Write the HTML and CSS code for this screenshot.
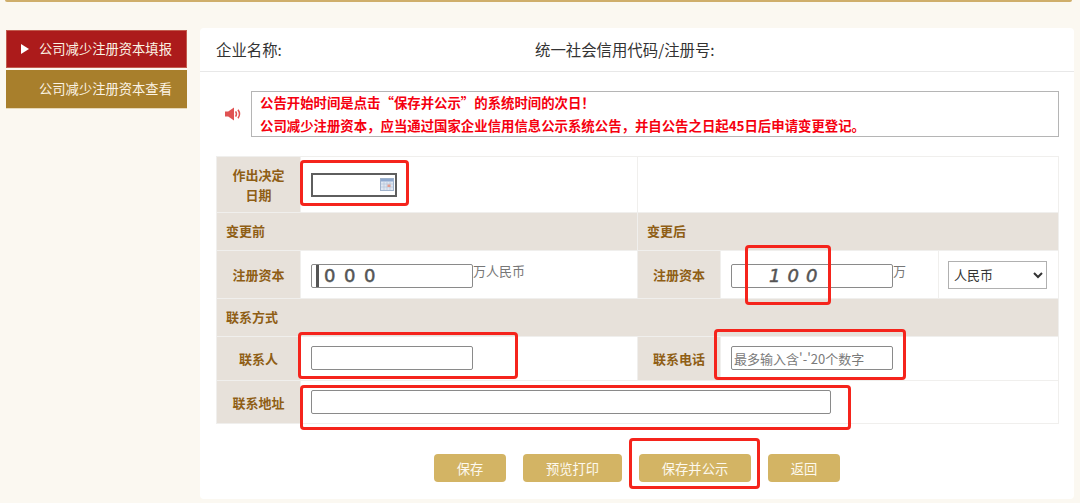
FILE: index.html
```html
<!DOCTYPE html>
<html lang="zh-CN">
<head>
<meta charset="utf-8">
<title>公司减少注册资本填报</title>
<link rel="stylesheet" href="styles.css">
</head>
<body>
<div class="page">
  <div class="topbar"></div>
  <div class="layout">
    <nav class="sidebar">
      <a class="nav-item nav-active"><span class="nav-arrow"></span>公司减少注册资本填报</a>
      <a class="nav-item nav-plain">公司减少注册资本查看</a>
    </nav>
    <main class="panel">
      <header class="company">
        <span class="company-name">企业名称:</span>
        <span class="company-code">统一社会信用代码/注册号:</span>
      </header>
      <section class="notice-row">
        <svg class="speaker" width="17" height="14" viewBox="0 0 17 14">
          <path d="M0 4.500h3.200L9 .6v12.800L3.200 9.500H0z" fill="#e05252"/>
          <path d="M10.600 4.400c1 1.500 1 3.700 0 5.200M13 2.800c1.800 2.500 1.800 5.900 0 8.400" fill="none" stroke="#e05252" stroke-width="1.500"/>
        </svg>
        <div class="notice">
          <p>公告开始时间是点击“保存并公示”的系统时间的次日！</p>
          <p>公司减少注册资本，应当通过国家企业信用信息公示系统公告，并自公告之日起45日后申请变更登记。</p>
        </div>
      </section>
      <table class="form-table">
        <colgroup>
          <col class="col-label"><col class="col-value"><col class="col-label2"><col class="col-value2"><col class="col-extra">
        </colgroup>
        <tr class="row-date">
          <th class="label label-date">作出决定<br>日期</th>
          <td class="value">
            <span class="date-field">
              <input class="date-input" type="text">
              <svg class="calendar" width="14" height="13" viewBox="0 0 14 13">
                <rect x="0.500" y="0.500" width="13" height="12" fill="#dfe7f2" stroke="#9fb2cc"/>
                <rect x="1" y="1" width="12" height="2.500" fill="#8fa9cf"/>
                <path d="M1 6h12M1 9h12M4 4v8M7 4v8M10 4v8" stroke="#b4c4da" stroke-width="0.700"/>
                <rect x="7.500" y="6.500" width="3" height="2.500" fill="#e39a8c"/>
              </svg>
            </span>
          </td>
          <td class="value" colspan="3"></td>
        </tr>
        <tr class="row-section">
          <th class="section" colspan="2">变更前</th>
          <th class="section" colspan="3">变更后</th>
        </tr>
        <tr class="row-capital">
          <th class="label">注册资本</th>
          <td class="value"><input class="field field-before masked" type="text" value="000"><span class="unit">万人民币</span></td>
          <th class="label">注册资本</th>
          <td class="value"><input class="field masked masked-after" type="text" value="100"><span class="unit">万</span></td>
          <td class="value value-select">
            <select class="currency"><option>人民币</option></select>
          </td>
        </tr>
        <tr class="row-section">
          <th class="section" colspan="5">联系方式</th>
        </tr>
        <tr class="row-contact">
          <th class="label">联系人</th>
          <td class="value"><input class="field" type="text"></td>
          <th class="label">联系电话</th>
          <td class="value" colspan="2"><input class="field" type="text" placeholder="最多输入含'-'20个数字"></td>
        </tr>
        <tr class="row-address">
          <th class="label">联系地址</th>
          <td class="value" colspan="4"><input class="field field-wide" type="text"></td>
        </tr>
      </table>
      <div class="actions">
        <button class="btn btn-save" type="button">保存</button>
        <button class="btn btn-preview" type="button">预览打印</button>
        <button class="btn btn-publish" type="button">保存并公示</button>
        <button class="btn btn-back" type="button">返回</button>
      </div>
    </main>
  </div>
  <div class="mark mark-date"></div>
  <div class="mark mark-capital"></div>
  <div class="mark mark-person"></div>
  <div class="mark mark-phone"></div>
  <div class="mark mark-address"></div>
  <div class="mark mark-publish"></div>
</div>
</body>
</html>
```
FILE: styles.css
```css
* { box-sizing: border-box; }
html, body { margin: 0; height: 100%; overflow: hidden; }
body {
  background: #fbf8f1;
  font-family: "Noto Sans CJK SC", "Liberation Sans", sans-serif;
  color: #333;
}
.page { position: relative; width: 1080px; height: 503px; }
.topbar {
  height: 2px;
  margin: 0 8px 0 5px;
  background: #cfae6b;
  border-radius: 0 0 3px 3px;
}
.layout {
  display: flex;
  align-items: flex-start;
  padding: 26px 6px 0 6px;
  gap: 13px;
}
.sidebar { width: 181px; display: flex; flex-direction: column; gap: 2px; margin-top: 2px; }
.nav-item {
  display: flex;
  align-items: center;
  height: 38px;
  padding: 0 0 2px 33px;
  font-size: 13.300px;
  color: #fbf3e4;
  white-space: nowrap;
  box-shadow: inset 0 0 0 1px rgba(235, 215, 175, .35);
}
.nav-active { background: #ac1b1b; position: relative; }
.nav-plain { background: #a87f2c; box-shadow: 0 1px 0 #e6d8b8; }
.nav-arrow {
  position: absolute;
  left: 15px;
  top: 14px;
  border-left: 8px solid #fff;
  border-top: 5px solid transparent;
  border-bottom: 5px solid transparent;
}
.panel {
  width: 874px;
  height: 471px;
  background: #fff;
  border-radius: 4px;
}
.company {
  display: flex;
  align-items: center;
  height: 44px;
  padding: 0 0 2px 16px;
  border-bottom: 1px solid #e8e8e8;
  font-size: 15.400px;
  color: #333;
}
.company-name { width: 319px; }
.notice-row {
  display: flex;
  align-items: center;
  margin: 19px 15px 0 25px;
  height: 46px;
}
.speaker { margin-right: 9px; flex: none; }
.notice {
  flex: 1;
  height: 46px;
  border: 1px solid #b5b5b5;
  padding: 0 0 0 8px;
  color: #f5000f;
  font-size: 13.400px;
  font-weight: 700;
  line-height: 23px;
  white-space: nowrap;
}
.notice p { margin: -1px 0 1px; }
.form-table {
  table-layout: fixed;
  border-collapse: collapse;
  width: 842px;
  margin: 19px 15px 0 16px;
  font-size: 13px;
}
.col-label { width: 84px; }
.col-value { width: 337px; }
.col-label2 { width: 83px; }
.col-value2 { width: 218px; }
.col-extra { width: 120px; }
.form-table th, .form-table td { border: 1px solid #f0efed; padding: 0; }
.row-date { height: 56px; }
.row-capital { height: 48px; }
.row-contact { height: 44px; }
.row-address { height: 43px; }
.row-section { height: 38px; }
.label {
  background: #e7e1da;
  color: #8f5e15;
  font-weight: 700;
  font-size: 13px;
  text-align: center;
}
.label-date { line-height: 20px; }
.form-table .section {
  background: #e7e1da;
  color: #8f5e15;
  font-weight: 700;
  font-size: 13px;
  text-align: left;
  padding: 0 0 2px 9px;
}
.form-table .value { padding-left: 10px; white-space: nowrap; }
.form-table .value-select { padding-left: 9px; }
.row-contact .value { padding-bottom: 1px; }
.date-field { position: relative; display: inline-block; vertical-align: middle; }
.date-input {
  display: block;
  width: 86px;
  height: 24px;
  border: 2px solid #5e5e5e;
  background: #fff;
  outline: none;
}
.calendar { position: absolute; right: 3px; top: 5px; }
.field {
  width: 162px;
  height: 24px;
  border: 1px solid #8a8a8a;
  border-radius: 2px;
  padding: 0 2px;
  font-family: inherit;
  font-size: 13px;
  color: #555;
  vertical-align: middle;
  outline: none;
}
.field::placeholder { color: #7a7a7a; opacity: 1; }
.field-wide { width: 520px; }
.masked {
  font-family: "DejaVu Sans", sans-serif;
  font-size: 18px;
  letter-spacing: 8.500px;
  color: #555;
  -webkit-text-stroke: 0.500px #555;
}
.field-before {
  padding-left: 12px;
  background: linear-gradient(#555, #555) 4px 0 / 3px 100% no-repeat #fff;
}
.masked-after { padding-left: 37px; letter-spacing: 7px; font-style: italic; }
.unit { color: #777; font-size: 13px; vertical-align: 3px; }
.currency {
  width: 99px;
  height: 28px;
  border: 1px solid #b0b0b0;
  background: #fff;
  font-family: inherit;
  font-size: 13px;
  color: #333;
  vertical-align: middle;
  padding-left: 1px;
}
.actions {
  display: flex;
  justify-content: center;
  gap: 17px;
  margin-top: 30px;
}
.btn {
  height: 28px;
  border: 0;
  border-radius: 4px;
  background: #d3b464;
  color: #fdf9ef;
  font-family: inherit;
  font-size: 13.300px;
  padding: 0;
}
.btn-save { width: 72px; }
.btn-preview { width: 99px; }
.btn-publish { width: 112px; }
.btn-back { width: 72px; }
.mark {
  position: absolute;
  border: 3px solid #f5241c;
  border-radius: 4px;
  pointer-events: none;
}
.mark-date { left: 300px; top: 160px; width: 109px; height: 46px; }
.mark-capital { left: 745px; top: 245px; width: 86px; height: 60px; }
.mark-person { left: 298px; top: 332px; width: 220px; height: 47px; }
.mark-phone { left: 714px; top: 329px; width: 192px; height: 51px; }
.mark-address { left: 300px; top: 385px; width: 551px; height: 45px; }
.mark-publish { left: 629px; top: 438px; width: 131px; height: 51px; }
```
